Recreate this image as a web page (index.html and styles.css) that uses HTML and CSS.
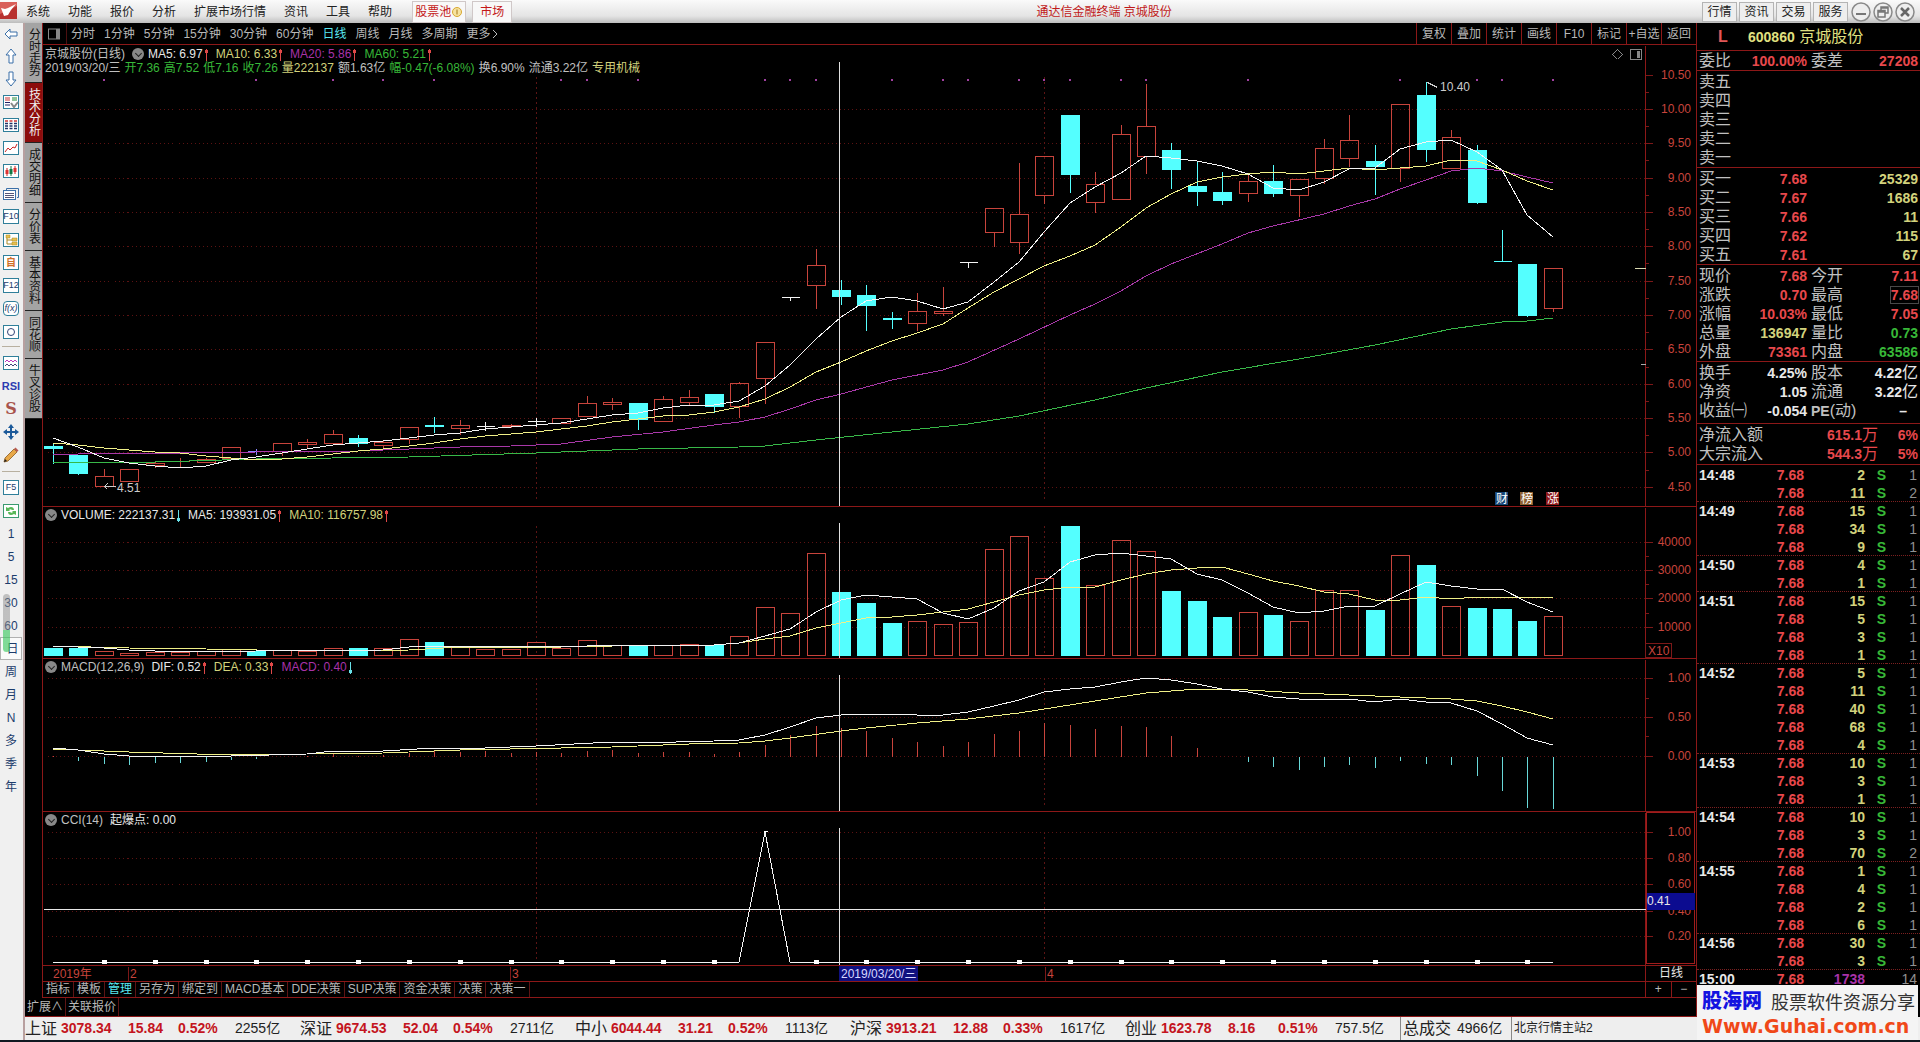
FILE: index.html
```html
<!DOCTYPE html>
<html lang="zh-CN">
<head>
<meta charset="utf-8">
<title>通达信金融终端 京城股份</title>
<link rel="stylesheet" href="styles.css">
</head>
<body>
<header class="menubar">
  <svg class="logo" viewBox="0 0 17 17" width="17" height="17"><rect width="17" height="17" fill="#b8322f"/><path d="M0 0h17v4L0 12z" fill="#d9605a"/><path d="M1 6l4 1 3-1 8-4-5 6-3 5-4 1z" fill="#fff"/></svg>
  <nav class="menus">
    <button>系统</button><button>功能</button><button>报价</button><button>分析</button><button>扩展市场行情</button><button>资讯</button><button>工具</button><button>帮助</button>
  </nav>
  <button class="hot">股票池<svg viewBox="0 0 12 12" width="12" height="12"><circle cx="6" cy="6" r="4.500" fill="#f6e3a0" stroke="#d9a830"/><path d="M6 3.500v5" stroke="#a87818"/></svg></button>
  <button class="hot market">市场</button>
  <h1 class="title">通达信金融终端 京城股份</h1>
  <div class="actions"><button>行情</button><button>资讯</button><button>交易</button><button>服务</button></div>
  <div class="winctl">
    <button aria-label="最小化"><svg viewBox="0 0 20 20" width="20" height="20"><circle cx="10" cy="10" r="9" fill="#eee" stroke="#8a8a8a" stroke-width="1.500"/><path d="M5 12h10" stroke="#777" stroke-width="2"/></svg></button>
    <button aria-label="还原"><svg viewBox="0 0 20 20" width="20" height="20"><circle cx="10" cy="10" r="9" fill="#eee" stroke="#8a8a8a" stroke-width="1.500"/><path d="M8 8V5h7v6h-3M5 8.500h7V15H5zM8 6h7M5 10h7" fill="none" stroke="#777" stroke-width="1.500"/></svg></button>
    <button aria-label="关闭"><svg viewBox="0 0 20 20" width="20" height="20"><circle cx="10" cy="10" r="9" fill="#eee" stroke="#8a8a8a" stroke-width="1.500"/><path d="M6 6l8 8M14 6l-8 8" stroke="#666" stroke-width="2.500"/></svg></button>
  </div>
</header>

<div class="workspace">
  <aside class="tools">
    <button aria-label="后退"><svg viewBox="0 0 16 16"><path d="M2 8l5-5v3h7v4H7v3z" fill="#fff" stroke="#3b6fa8"/></svg></button>
    <button aria-label="上翻"><svg viewBox="0 0 16 16"><path d="M8 1l5 6h-3v8H6V7H3z" fill="#fff" stroke="#3b6fa8"/></svg></button>
    <button aria-label="下翻"><svg viewBox="0 0 16 16"><path d="M8 15l5-6h-3V1H6v8H3z" fill="#fff" stroke="#3b6fa8"/></svg></button>
    <button aria-label="自选"><svg viewBox="0 0 16 16"><rect x=".5" y="1.500" width="15" height="13" fill="#fff" stroke="#2f7f9a"/><path d="M2 4h5M2 6h5" stroke="#c33"/><path d="M9 4h5M9 6h5" stroke="#283"/><path d="M2 8.500h5M2 11h5" stroke="#226"/><path d="M8 9l3 4 4-5" fill="none" stroke="#888" stroke-width="2"/></svg></button>
    <button aria-label="列表"><svg viewBox="0 0 16 16"><rect x=".5" y="1.500" width="15" height="13" fill="#fff" stroke="#2f7f9a"/><path d="M2 4h12" stroke="#c33" stroke-width="1.500" stroke-dasharray="3 1.500"/><path d="M2 6.500h12M2 9h12M2 11.500h12" stroke="#236" stroke-width="1.500" stroke-dasharray="3 1.500"/></svg></button>
    <button aria-label="走势"><svg viewBox="0 0 16 16"><rect x=".5" y="1.500" width="15" height="13" fill="#fff" stroke="#2f7f9a"/><path d="M2 12l3-4 2 2 3-3 2 1 2-4" fill="none" stroke="#c22"/></svg></button>
    <button aria-label="K线"><svg viewBox="0 0 16 16"><rect x=".5" y="1.500" width="15" height="13" fill="#fff" stroke="#2f7f9a"/><path d="M4 5v8M12 3v8" stroke="#c22"/><path d="M8 3v10" stroke="#174"/><path d="M2.500 7h3v4h-3zM10.500 5h3v4h-3z" fill="#d33"/><path d="M6.500 6h3v5h-3z" fill="#174"/></svg></button>
    <button aria-label="多窗口"><svg viewBox="0 0 16 16"><path d="M3.500 4V2.500h12v9H14" fill="none" stroke="#3b6fa8"/><rect x=".5" y="4.500" width="12" height="9" fill="#fff" stroke="#3b6fa8"/><path d="M2 7.500h9M2 9.500h9M2 11.500h9" stroke="#557"/></svg></button>
    <button class="boxed">F10</button>
    <button aria-label="分类"><svg viewBox="0 0 16 16"><rect x=".5" y="1.500" width="15" height="13" fill="#fff" stroke="#2f7f9a"/><path d="M4 5v7h5M4 8h5" fill="none" stroke="#a82"/><path d="M3 3h4v3H3zM9 6h5v3H9zM9 10h5v3H9z" fill="#e8c050" stroke="#a82" stroke-width=".5"/></svg></button>
    <button class="boxed orange">自</button>
    <button class="boxed">F12</button>
    <button class="boxed round"><i>f(x)</i></button>
    <button aria-label="圆"><svg viewBox="0 0 16 16"><rect x=".5" y="1.500" width="15" height="13" fill="#fff" stroke="#2f7f9a"/><circle cx="8" cy="8" r="3.500" fill="none" stroke="#347"/></svg></button>
    <hr>
    <button aria-label="波动"><svg viewBox="0 0 16 16"><rect x=".5" y="1.500" width="15" height="13" fill="#fff" stroke="#2f7f9a"/><path d="M2 7l2-2 2 2 2-2 2 2 2-2 2 2" fill="none" stroke="#b3b"/><path d="M2 11l2-2 2 2 2-2 2 2 2-2 2 2" fill="none" stroke="#447"/></svg></button>
    <button class="rsi">RSI</button>
    <button class="money">S</button>
    <button aria-label="移动"><svg viewBox="0 0 16 16"><path d="M8 0l3 4H9v3h3V5l4 3-4 3V9H9v3h2l-3 4-3-4h2V9H4v2L0 8l4-3v2h3V4H5z" fill="#1c5a9a"/></svg></button>
    <button aria-label="画笔"><svg viewBox="0 0 16 16"><path d="M1 15l1-4 9-9 3 3-9 9z" fill="#e8a848" stroke="#8a5a20" stroke-width=".8"/><path d="M11 2l1.500-1.500 3 3L14 5z" fill="#b85a50"/><path d="M1 15l1-3 2 2z" fill="#222"/></svg></button>
    <hr class="second">
    <button class="boxed">F5</button>
    <button aria-label="刷新"><svg viewBox="0 0 16 16"><rect x=".5" y="1.500" width="15" height="13" fill="#fff" stroke="#3a9a70"/><path d="M3 8V4l2 1c3-2 6-1 6 2H9C8 6 7 6 6 7l1 1zM13 8v4l-2-1c-3 2-6 1-6-2h2c1 1 2 1 3 0L9 8z" fill="#58b858"/></svg></button>
    <button>1</button><button>5</button><button>15</button><button>30</button><button>60</button>
    <button class="current">日<span class="meter"></span></button>
    <button>周</button><button>月</button><button>N</button><button>多</button><button>季</button><button>年</button>
  </aside>

  <div class="content">
    <div class="upper">
      <div class="left">
        <div class="charts">
          <nav class="vtabs">
            <button>分时走势</button><button class="on">技术分析</button><button>成交明细</button><button>分价表</button><button>基本资料</button><button>同花顺</button><button>牛叉诊股</button>
          </nav>
          <main class="stage">
            <div class="periods">
              <button class="split" aria-label="布局"><svg viewBox="0 0 12 12" width="12" height="12"><rect x=".5" y="1" width="11" height="10" fill="none" stroke="#888"/><path d="M8 1h3v10H8z" fill="#888"/></svg></button>
              <div class="plist"><button>分时</button><button>1分钟</button><button>5分钟</button><button>15分钟</button><button>30分钟</button><button>60分钟</button><button class="on">日线</button><button>周线</button><button>月线</button><button>多周期</button><button>更多<svg viewBox="0 0 8 10" width="8" height="10"><path d="M2 1l4 4-4 4" fill="none" stroke="#bbb"/></svg></button></div>
              <div class="ops"><button>复权</button><button>叠加</button><button>统计</button><button>画线</button><button>F10</button><button>标记</button><button>+自选</button><button>返回</button></div>
            </div>
            <section class="panel">
              <svg class="plot" id="price"></svg>
              <div class="legend">
                <div class="line"><span class="g">京城股份(日线)</span><b class="drop"></b><span>MA5: 6.97<i class="up"></i></span><span class="y">MA10: 6.33<i class="up"></i></span><span class="p">MA20: 5.86<i class="up"></i></span><span class="gr">MA60: 5.21<i class="up"></i></span></div>
                <div class="line info"><span class="g">2019/03/20/三</span><span class="gr">开7.36</span><span class="gr">高7.52</span><span class="gr">低7.16</span><span class="gr">收7.26</span><span class="y">量222137</span><span class="g">额1.63亿</span><span class="gr">幅-0.47(-6.08%)</span><span class="g">换6.90%</span><span class="g">流通3.22亿</span><span class="y">专用机械</span></div>
              </div>
            </section>
            <section class="panel">
              <svg class="plot" id="volume"></svg>
              <div class="legend"><div class="line"><b class="drop"></b><span>VOLUME: 222137.31<i class="down"></i></span><span>MA5: 193931.05<i class="up"></i></span><span class="y">MA10: 116757.98<i class="up"></i></span></div></div>
            </section>
            <section class="panel">
              <svg class="plot" id="macd"></svg>
              <div class="legend"><div class="line"><b class="drop"></b><span class="g">MACD(12,26,9)</span><span>DIF: 0.52<i class="up"></i></span><span class="y">DEA: 0.33<i class="up"></i></span><span class="p">MACD: 0.40<i class="down"></i></span></div></div>
            </section>
            <section class="panel">
              <svg class="plot" id="cci"></svg>
              <div class="legend"><div class="line"><b class="drop"></b><span class="g">CCI(14)</span><span>起爆点: 0.00</span></div></div>
            </section>
            <div class="dates"><svg class="plot" id="dates"></svg><span class="unit">日线</span></div>
            <div class="itabs"><button>指标</button><button>模板</button><button class="on">管理</button><button>另存为</button><button>绑定到</button><button>MACD基本</button><button>DDE决策</button><button>SUP决策</button><button>资金决策</button><button>决策</button><button>决策一</button><div class="zoom"><button>+</button><button>−</button></div></div>
          </main>
        </div>
        <div class="ext"><button>扩展∧</button><button>关联报价</button></div>
      </div>

      <aside class="side">
        <h2 class="stock"><span class="flag">L</span><span><b>600860</b> 京城股份</span></h2>
        <table class="quote ratio"><tbody><tr><th>委比</th><td class="r">100.00%</td><th>委差</th><td class="r">27208</td></tr></tbody></table>
        <table class="quote"><tbody><tr><th>卖五</th><td></td><th></th><td></td></tr><tr><th>卖四</th><td></td><th></th><td></td></tr><tr><th>卖三</th><td></td><th></th><td></td></tr><tr><th>卖二</th><td></td><th></th><td></td></tr><tr><th>卖一</th><td></td><th></th><td></td></tr></tbody></table>
        <table class="quote"><tbody><tr><th>买一</th><td class="r">7.68</td><th></th><td class="y">25329</td></tr><tr><th>买二</th><td class="r">7.67</td><th></th><td class="y">1686</td></tr><tr><th>买三</th><td class="r">7.66</td><th></th><td class="y">11</td></tr><tr><th>买四</th><td class="r">7.62</td><th></th><td class="y">115</td></tr><tr><th>买五</th><td class="r">7.61</td><th></th><td class="y">67</td></tr></tbody></table>
        <table class="quote"><tbody><tr><th>现价</th><td class="r">7.68</td><th>今开</th><td class="r">7.11</td></tr><tr><th>涨跌</th><td class="r">0.70</td><th>最高</th><td class="r"><span class="mark">7.68</span></td></tr><tr><th>涨幅</th><td class="r">10.03%</td><th>最低</th><td class="r">7.05</td></tr><tr><th>总量</th><td class="y">136947</td><th>量比</th><td class="gr">0.73</td></tr><tr><th>外盘</th><td class="r">73361</td><th>内盘</th><td class="gr">63586</td></tr></tbody></table>
        <table class="quote base"><tbody><tr><th>换手</th><td>4.25%</td><th>股本</th><td>4.22<em>亿</em></td></tr><tr><th>净资</th><td>1.05</td><th>流通</th><td>3.22<em>亿</em></td></tr><tr><th>收益㈠</th><td>-0.054</td><th><b>PE</b>(动)</th><td class="dash">–</td></tr></tbody></table>
        <table class="quote flow"><tbody><tr><th>净流入额</th><td class="r">615.1<em>万</em></td><td class="r">6%</td></tr><tr><th>大宗流入</th><td class="r">544.3<em>万</em></td><td class="r">5%</td></tr></tbody></table>
        <table class="ticks"><tbody id="ticks"></tbody></table>
      </aside>
    </div>

    <footer class="status">
      <div class="idx"><span>上证</span><b>3078.34</b><b>15.84</b><b>0.52%</b><span>2255亿</span></div>
      <div class="idx"><span>深证</span><b>9674.53</b><b>52.04</b><b>0.54%</b><span>2711亿</span></div>
      <div class="idx"><span>中小</span><b>6044.44</b><b>31.21</b><b>0.52%</b><span>1113亿</span></div>
      <div class="idx"><span>沪深</span><b>3913.21</b><b>12.88</b><b>0.33%</b><span>1617亿</span></div>
      <div class="idx"><span>创业</span><b>1623.78</b><b>8.16</b><b>0.51%</b><span>757.5亿</span></div>
      <div class="total"><span>总成交</span><span>4966亿</span></div>
      <div class="host">北京行情主站2</div>
    </footer>
  </div>
</div>
<div class="brand"><div class="row"><strong>股海网</strong><span>股票软件资源分享</span></div><a href="#">Www.Guhai.com.cn</a></div>
<script src="chart.js"></script>
</body>
</html>
```
FILE: styles.css
```css
* { box-sizing: border-box; }
body {
  margin: 0;
  min-height: 100vh;
  display: flex;
  flex-direction: column;
  background: #101820;
  color: #e8e8e8;
  font: 12px/16px "Liberation Sans", "Noto Sans CJK SC", sans-serif;
  padding-bottom: 2px;
}
button {
  font: inherit;
  color: inherit;
  background: none;
  border: 0;
  padding: 0;
  margin: 0;
  white-space: nowrap;
}
svg { display: block; }
.r { color: #e8484c; }
.y { color: #d2d27c; }
.p { color: #a832a8; }
.g { color: #c0c0c0; }
.gr { color: #38b838; }

/* menu bar */
.menubar {
  display: flex;
  align-items: center;
  height: 23px;
  background: linear-gradient(#fafafa, #e4e4e4 70%, #bdbdbd);
  color: #222;
}
.logo { margin-bottom: 2px; }
.menus { display: flex; gap: 18px; padding-left: 9px; }
.hot {
  display: flex;
  align-items: center;
  height: 22px;
  margin-left: 20px;
  padding: 0 2px;
  color: #c41818;
  background: #f8f8f8;
  border: 1px solid #d0c8c8;
}
.hot.market { margin-left: 6px; padding: 0 7px; }
.title { flex: 1; margin: 0; padding-right: 6px; text-align: center; font-size: 12px; font-weight: normal; color: #c01818; }
.actions { display: flex; gap: 2px; }
.actions button { width: 35px; height: 20px; border: 1px solid #b4b4b4; background: #eee; }
.winctl { display: flex; gap: 2px; padding: 0 5px 0 3px; }

/* frame */
.workspace { flex: 1; display: flex; }
.tools {
  width: 25px;
  flex: none;
  display: flex;
  flex-direction: column;
  background: #f0f0f0;
  border-right: 2px solid #b8a0a0;
  color: #1c3c6c;
}
.tools button { height: 23px; display: flex; align-items: center; justify-content: center; position: relative; width: 22px; }
.tools button:first-child { height: 21px; }
.tools svg { width: 16px; height: 16px; }
.tools hr { width: 18px; margin: 3px 2px 0; border: 0; border-top: 1px solid #b8b0a0; height: 5px; }
.tools .second { margin-top: 5px; }
.tools .boxed { width: 16px; height: 15px; margin: 4px 3px; border: 1px solid #2f7f9a; background: #fff; font-size: 9px; line-height: 13px; }
.tools .round { border-radius: 4px; }
.tools .orange { color: #d07028; font-weight: bold; font-size: 10px; }
.tools .rsi { font-weight: bold; font-size: 11px; color: #2c3cb0; }
.tools .money { font: bold 16px/20px "DejaVu Serif", serif; color: #a8544c; }
.tools .current { border: 1px solid #b0b0b0; background: #fafafa; padding-left: 3px; }
.meter { position: absolute; left: 2px; bottom: 7px; width: 7px; height: 58px; border-radius: 4px; background: linear-gradient(#90909080 0 36px, #38c85ca0 36px); }
.content { flex: 1; min-width: 0; display: flex; flex-direction: column; background: #000; }
.upper { flex: 1; display: flex; }
.left { flex: 1; min-width: 0; display: flex; flex-direction: column; }
.charts { flex: 1; display: flex; }
.vtabs { width: 17px; flex: none; }
.vtabs button {
  display: block;
  width: 17px;
  padding: 5px 1px 6px 1px;
  writing-mode: vertical-rl;
  font-size: 12px;
  line-height: 14px;
  color: #111;
  background: #a4a4a4;
  border-bottom: 1px solid #222;
}
.vtabs .on { background: #8c0c0c; color: #f0f0f0; }
.stage {
  flex: 1;
  min-width: 0;
  display: grid;
  grid-template-columns: minmax(0, 1fr);
  grid-template-rows: 22px minmax(200px, 461fr) minmax(90px, 152fr) minmax(90px, 153fr) minmax(90px, 154fr) 16px 17px;
  border-left: 1px solid #8c1818;
}
.periods { display: flex; border-bottom: 1px solid #8c1818; color: #b8b8b8; }
.periods .split { width: 24px; padding-left: 5px; border-right: 1px solid #4c1010; }
.plist { flex: 1; display: flex; gap: 9px; padding-left: 4px; }
.plist button { display: flex; align-items: center; }
.ops { display: flex; }
.ops button { width: 35px; border-left: 1px solid #8c1818; }
.periods .on, .itabs .on { color: #58e8f0; }

/* chart panels */
.panel { display: grid; grid-template: minmax(0, 1fr) / minmax(0, 1fr); }
.panel + .panel { border-top: 1px solid #8c1818; }
.panel > * { grid-area: 1 / 1; }
.plot { width: 100%; height: 0; min-height: 100%; font-size: 12px; }
.legend { z-index: 1; align-self: start; padding-left: 2px; padding-top: 1px; }
.line { display: flex; gap: 7px; line-height: 14px; align-items: center; white-space: nowrap; }
.panel:nth-child(2) .legend { padding-top: 2px; }
.line.info { gap: 4px; }
.drop { width: 12px; height: 12px; border-radius: 50%; background: #888; margin-right: -3px; display: grid; place-items: center; }
.drop::after { content: ""; width: 4px; height: 4px; border: solid #222; border-width: 0 1px 1px 0; rotate: 45deg; margin-top: -2px; }
.line i { display: inline-block; width: 1px; height: 12px; margin: 0 2px 0 3px; vertical-align: middle; position: relative; background: #e04848; }
.line i::after { content: ""; position: absolute; left: -1px; top: 1px; width: 3px; height: 3px; background: #e04848; }
.line i.down, .line i.down::after { background: #68e0e8; }
.line i.down::after { top: auto; bottom: 1px; }
.dates { display: flex; border-top: 1px solid #8c1818; }
.dates .plot { flex: 1; width: auto; }
.unit { width: 51px; text-align: center; line-height: 15px; border-left: 1px solid #8c1818; }
.itabs { display: flex; border-top: 1px solid #8c1818; border-bottom: 1px solid #8c1818; color: #b8b8b8; }
.itabs > button { padding: 0 3px; border-right: 1px solid #5c1414; line-height: 15px; }
.zoom { margin-left: auto; display: flex; width: 51px; border-left: 1px solid #8c1818; }
.zoom button { flex: 1; line-height: 15px; }
.zoom button + button { border-left: 1px solid #8c1818; }
.ext { display: flex; height: 19px; color: #b8b8b8; border-bottom: 1px solid #8c1818; }
.ext button { padding: 0 2px; border-right: 1px solid #5c1414; }

/* quote panel */
.side { width: 224px; flex: none; border-left: 1px solid #8c1818; }
.stock { display: flex; margin: 0; height: 28px; padding-left: 21px; gap: 20px; font-size: 16px; line-height: 27px; font-weight: normal; color: #e0e080; border-bottom: 1px solid #8c1818; }
.stock b { font-size: 14px; }
.flag { color: #e05858; font-weight: bold; width: 10px; }
table { border-collapse: separate; border-spacing: 0; table-layout: fixed; width: 100%; }
.quote { border-bottom: 1px solid #8c1818; padding-top: 1px; }
.quote.ratio { padding-top: 0; }
.quote.base { padding-bottom: 3px; }
.quote.flow { padding-bottom: 1px; }
.quote tr { height: 19px; }
.quote th, .quote td { padding: 0; height: 19px; line-height: 18px; white-space: nowrap; }
.quote th { font-size: 16px; font-weight: normal; text-align: left; color: #c0c0c0; padding-left: 2px; }
.quote th b { font-size: 14px; }
.quote td { font-size: 14px; font-weight: bold; text-align: right; }
.quote th:first-child { width: 50px; }
.quote td:nth-child(2) { width: 60px; }
.quote th:nth-child(3) { width: 50px; padding-left: 4px; }
.quote td:last-child { padding-right: 2px; }
.quote.flow th:first-child { width: 70px; }
.quote.flow td:nth-child(2) { width: 111px; }
.quote em { font-style: normal; font-weight: normal; font-size: 16px; line-height: 16px; }
.quote td.dash { padding-right: 13px; }
.mark { display: inline-block; line-height: 16px; outline: 1px solid #484848; }
.ticks td { padding: 0; height: 18px; line-height: 16px; font-size: 14px; font-weight: bold; text-align: right; border-top: 1px solid transparent; }
.ticks tr:not(:first-child).minute td { border-top: 1px dotted #7c2020; }
.ticks td:nth-child(1) { width: 50px; text-align: left; padding-left: 2px; }
.ticks td:nth-child(2) { width: 57px; }
.ticks td:nth-child(3) { width: 61px; }
.ticks td:nth-child(4) { width: 21px; }
.ticks td:nth-child(5) { font-weight: normal; color: #909090; padding-right: 3px; }

/* index strip */
.status { display: flex; height: 23px; background: #eee; color: #222; font-size: 14px; line-height: 23px; white-space: nowrap; }
.idx { width: 275px; display: grid; grid-template-columns: 36px 67px 50px 57px 1fr; }
.status span { font-size: 16px; }
.idx span:last-child, .total span:last-child { font-size: 14px; }
.idx b { color: #c41420; }
.total { display: flex; gap: 6px; width: 111px; border-left: 1px solid #888; padding-left: 2px; }
.host { border-left: 1px solid #888; padding-left: 2px; font-size: 12px; }
.brand { position: absolute; right: 2px; bottom: 2px; width: 221px; background: #f4f4f4; padding: 4px 3px 0 5px; height: 55px; }
.brand .row { display: flex; justify-content: space-between; line-height: 24px; }
.brand strong { font-size: 20px; color: #1414e0; font-weight: 900; }
.brand .row span { font: 18px/24px "Noto Sans CJK SC", sans-serif; color: #333; }
.brand a { display: block; font: bold 19px/26px "DejaVu Sans", sans-serif; color: #f04818; text-decoration: none; }
```
FILE: chart.js
```js
const RED = '#c8443c', DIM = '#7c1818', CYAN = '#54ffff', WHITE = '#f4f4f4', YELLOW = '#f0f088';
const PLOT = 1602, AXIS = 51, FIRST = 10, STEP = 25.42;

// kind, high, body top, body bottom, low
const candles = `c442,446,449,463 c455,455,474,474 r468,476,486,486 r468,469,481,481 r460,463,465,467 r457,461,461,466
r457,459,462,462 r446,447,458,458 b448,451,451,454 r443,443,451,455 r438,442,444,448 r429,434,443,443 c434,438,444,446
r440,442,445,447 r427,427,439,443 c416,425,427,432 r419,425,428,434 w421,426,426,430 r423,425,426,427 w417,421,421,426
r417,418,423,423 r395,403,416,416 r397,402,404,409 c403,403,420,429 r395,399,421,421 r389,397,402,404 c393,394,407,412
r381,383,406,417 r342,342,378,403 w297,297,297,300 r248,265,285,308 c279,290,297,304 c284,295,306,330 c311,318,320,328
r292,311,323,330 r286,311,313,315 w262,262,262,267 r208,208,232,246 r162,214,242,253 r156,156,195,203 c115,115,175,192
r171,184,202,212 r124,134,199,199 r83,126,156,173 c142,150,170,188 c160,186,192,205 c171,192,201,204 r172,181,193,201
c164,181,194,196 r179,179,195,216 r138,148,178,183 r114,140,158,166 c144,161,167,194 r104,104,168,181 c81,95,150,161
r129,137,168,168 c144,150,203,203 c229,261,261,261 c263,264,316,316 r268,268,308,311`.split(/\s+/)
  .map(s => [s[0], ...s.slice(1).split(',').map(Number)]);

const volumes = [648,648,651,653,652,652,651,649,651,650,651,648,648,648,639,642,647,649,649,642,648,640,645,645,645,644,645,636,607,613,553,592,603,623,621,624,622,549,536,578,526,585,540,551,591,601,617,612,615,621,590,590,610,555,565,606,608,609,621,616];
const hist = [755,760,763,764,762,762,761,759,758,756,755,753,755,754,752,750,751,750,752,751,752,750,749,752,751,751,753,751,744,734,725,727,730,737,741,745,741,733,730,722,724,728,725,726,735,747,756,761,766,769,766,764,767,760,763,764,775,790,807,808];
const seq = a => a.map((y, i) => [i, y]);
const ma5 = seq([438,447,458,463,466,468,466,460,457,453,449,445,443,441,438,435,433,429,427,425,423,419,415,413,408,405,405,401,386,365,339,317,301,297,301,309,302,282,262,232,203,187,173,156,158,161,166,174,188,190,182,169,168,149,142,140,152,170,215,237]);
const ma10 = seq([443,445,448,450,452,453,456,458,460,459,457,454,451,449,446,443,439,436,434,432,429,426,422,419,416,415,412,407,399,387,372,362,351,341,333,324,308,292,279,266,256,245,227,208,194,182,177,174,172,174,171,168,170,168,166,160,161,170,181,190]);
const ma20 = [[0,455],[2,453],[5,453],[8,452],[12,451],[16,447],[18,446],[20,444],[22,437],[24,432],[26,425],[27,422],[28,417],[29,409],[30,400],[31,394],[33,380],[35,370],[36,362],[38,339],[40,315],[41,304],[42,291],[43,276],[44,264],[46,244],[47,233],[48,226],[50,214],[51,206],[52,199],[53,189],[54,180],[55,171],[56,168],[57,171],[58,177],[59,183]];
const ma60 = [[0,462],[4,462],[8,459],[14,457],[19,453],[23,449],[27,447],[28,446],[30,440],[33,432],[36,424],[38,416],[41,400],[43,388],[46,372],[49,359],[52,345],[55,329],[57,322],[58,321],[59,318]];
const vma5 = [[0,646],[1,647],[2,648],[3,650],[5,652],[8,651],[13,650],[14,647],[15,646],[19,646],[20,647],[21,646],[22,645],[26,645],[27,643],[28,636],[29,629],[30,612],[31,600],[32,595],[33,597],[34,599],[35,613],[36,619],[37,608],[38,591],[39,582],[40,562],[41,555],[42,553],[43,556],[44,559],[45,574],[46,580],[47,593],[48,607],[49,613],[50,611],[51,606],[52,606],[53,594],[54,582],[55,586],[56,589],[57,589],[58,602],[59,612]];
const vma10 = [[0,646],[3,648],[6,649],[10,651],[12,651],[14,650],[16,647],[20,647],[24,645],[26,645],[27,643],[28,639],[29,636],[30,628],[31,623],[32,618],[33,617],[34,615],[35,612],[36,609],[37,602],[38,595],[39,590],[40,587],[41,587],[42,580],[43,574],[44,570],[45,568],[46,567],[47,574],[48,581],[49,586],[50,592],[51,594],[52,600],[53,600],[54,597],[55,599],[56,597],[59,597]];
const dif = [[0,748],[1,750],[2,754],[3,756],[7,756],[10,754],[11,751],[13,751],[15,748],[17,748],[19,746],[22,742],[23,743],[26,741],[27,740],[28,735],[29,727],[30,718],[31,715],[32,714],[33,714],[34,715],[35,715],[36,712],[37,706],[38,700],[39,692],[40,689],[41,687],[42,682],[43,678],[44,680],[45,684],[46,689],[47,692],[48,697],[49,699],[51,699],[52,702],[53,699],[54,702],[55,703],[56,711],[57,724],[58,738],[59,745]];
const dea = [[0,749],[3,752],[7,755],[10,754],[13,753],[16,750],[22,747],[25,744],[27,743],[28,741],[29,738],[31,731],[32,728],[34,723],[36,719],[38,713],[41,701],[43,693],[45,689],[46,689],[47,690],[49,693],[51,695],[53,697],[55,699],[56,701],[57,706],[58,712],[59,719]];
const signals = [2,8,11,13,15,20,21,23,28,29,30,33,35,36,38,39,40,42,43,47,53,56,57,59];

function canvas(id, top, bottom, plotWidth) {
  const el = document.getElementById(id);
  const W = el.clientWidth, H = el.clientHeight;
  const pw = plotWidth ? W : W - AXIS;
  let out = '';
  const k = pw / PLOT;
  const px = v => Math.round(v * k);
  const X = i => px(FIRST + i * STEP);
  const Y = v => Math.round((v - top) / (bottom - top) * H);
  const c = {
    W, H, pw, px, X, Y,
    line(x1, y1, x2, y2, color, extra = '') {
      out += `<path d="M${x1 + .5} ${y1 + .5}L${x2 + .5} ${y2 + .5}" stroke="${color}" ${extra}/>`;
    },
    rect(x, y, w, h, fill, stroke = 'none') {
      const o = stroke === 'none' ? 0 : .5;
      out += `<rect x="${x + o}" y="${y + o}" width="${w}" height="${h}" fill="${fill}" stroke="${stroke}"/>`;
    },
    curve(points, color) {
      out += `<polyline points="${points.map(p => X(p[0]) + ',' + Y(p[1])).join(' ')}" fill="none" stroke="${color}"/>`;
    },
    text(x, y, s, color, anchor = 'start') {
      out += `<text x="${x}" y="${y}" fill="${color}" text-anchor="${anchor}">${s}</text>`;
    },
    frame(labels, from, minor) {
      labels.forEach(([v, s], n) => {
        if (n || id !== 'price') c.line(4, Y(v), pw, Y(v), '#5c1212', 'stroke-dasharray="1 3"');
        c.line(pw, Y(v), pw + 7, Y(v), DIM);
        c.text(W - 5, Y(v) + 4, s, RED, 'end');
        if (n) for (let j = 1; j < minor; j++) {
          const y = Y(labels[n - 1][0] + (v - labels[n - 1][0]) * j / minor);
          c.line(pw, y, pw + 3, y, DIM);
        }
      });
      [19, 39].forEach(i => c.line(X(i), Y(from), X(i), H - 6, '#5c1414', 'stroke-dasharray="2 3"'));
      c.line(pw, 0, pw, H, '#8c1818');
    },
    cross(from) { c.line(px(796), Y(from), px(796), H, '#e0e0e0'); },
    done() { el.innerHTML = `<g shape-rendering="crispEdges">${out}</g>`; }
  };
  return c;
}

function drawPrice() {
  const c = canvas('price', 45, 506);
  c.frame(['10.50','10.00','9.50','9.00','8.50','8.00','7.50','7.00','6.50','6.00','5.50','5.00','4.50'].map((s, i) => [74.5 + i * 34.36, s]), 76, 2);
  signals.forEach(i => c.rect(c.X(i) - 1, c.Y(79), 2, 2, '#a040a0'));
  candles.forEach(([kind, hi, a, b, lo], i) => {
    const x = c.X(i), color = { r: RED, c: CYAN, w: WHITE, b: '#8888ff' }[kind];
    if (a === b) { c.line(x - 9, c.Y(a), x + 9, c.Y(a), color); c.line(x, c.Y(hi), x, c.Y(lo), color); return; }
    if (kind === 'c') { c.line(x, c.Y(hi), x, c.Y(lo), color); c.rect(x - 9, c.Y(a), 19, c.Y(b) - c.Y(a), CYAN); return; }
    if (hi < a) c.line(x, c.Y(hi), x, c.Y(a), RED);
    if (lo > b) c.line(x, c.Y(b), x, c.Y(lo), RED);
    c.rect(x - 9, c.Y(a), 18, c.Y(b) - c.Y(a), 'none', RED);
  });
  c.curve(ma60, '#38b848'); c.curve(ma20, '#a838a8'); c.curve(ma10, YELLOW); c.curve(ma5, WHITE);
  c.line(c.px(1384), c.Y(82), c.px(1394), c.Y(87), '#ccc');
  c.text(c.px(1397), c.Y(91), '10.40', '#ccc');
  c.line(c.px(61), c.Y(486), c.px(72), c.Y(486), '#ccc');
  c.line(c.px(61), c.Y(486), c.px(64), c.Y(483), '#ccc');
  c.line(c.px(61), c.Y(486), c.px(64), c.Y(489), '#ccc');
  c.text(c.px(74), c.Y(492), '4.51', '#ccc');
  [['财', '#184878', 57], ['榜', '#906030', 58], ['涨', '#901818', 59]].forEach(([s, bg, i]) => {
    c.rect(c.X(i) - 7, c.Y(492), 13, 13, bg);
    c.text(c.X(i) - 6, c.Y(503), s, '#fff');
  });
  c.line(c.pw - 11, c.Y(268), c.pw, c.Y(268), '#d8d8b0');
  c.line(c.pw - 5, c.Y(364), c.pw, c.Y(364), '#aaa');
  c.line(c.pw - 28, 4, c.pw - 23, 9, '#888'); c.line(c.pw - 23, 9, c.pw - 28, 14, '#888');
  c.line(c.pw - 28, 14, c.pw - 33, 9, '#888'); c.line(c.pw - 33, 9, c.pw - 28, 4, '#888');
  c.rect(c.pw - 15, 4, 11, 10, 'none', '#888'); c.rect(c.pw - 8, 6, 3, 7, '#888');
  c.cross(61);
  c.done();
}

function drawVolume() {
  const c = canvas('volume', 507, 658);
  c.frame([[542, '40000'], [570, '30000'], [598, '20000'], [627, '10000']], 525, 2);
  volumes.forEach((v, i) => {
    const x = c.X(i), y = c.Y(v), h = c.Y(655) - y;
    if (candles[i][0] === 'c' || i === 8) c.rect(x - 9, y, 19, h + 1, CYAN);
    else c.rect(x - 9, y, 18, h, 'none', RED);
  });
  c.curve(vma10, YELLOW); c.curve(vma5, WHITE);
  c.rect(c.pw, c.H - 15, 26, 14, '#000', DIM);
  c.text(c.pw + 3, c.H - 3, 'X10', RED);
  c.cross(522);
  c.done();
}

function drawMacd() {
  const c = canvas('macd', 659, 811);
  c.frame([[678, '1.00'], [717, '0.50'], [756, '0.00']], 677, 2);
  hist.forEach((v, i) => { if (v !== 756) c.line(c.X(i), c.Y(756), c.X(i), c.Y(v), v < 756 ? RED : '#68d8d8'); });
  c.curve(dea, YELLOW); c.curve(dif, WHITE);
  c.cross(674);
  c.done();
}

function drawCci() {
  const c = canvas('cci', 812, 965);
  c.frame([[832, '1.00'], [858, '0.80'], [884, '0.60'], [911, '0.40'], [936, '0.20']], 831, 1);
  c.curve([[0, 962], [27, 962], [28, 832], [29, 962], [59, 962]], WHITE);
  for (let i = 2; i < 60; i += 2) if (i !== 28) c.rect(c.X(i) - 2, c.Y(960), 5, 4, '#fff');
  c.line(c.X(28) - 2, c.Y(831), c.X(28) + 2, c.Y(831), '#fff');
  c.line(0, c.Y(909), c.pw, c.Y(909), '#e8e8e8');
  c.rect(c.pw + 1, 0, AXIS - 3, c.H - 2, 'none', '#a01c1c');
  c.rect(c.pw + 2, c.Y(893), AXIS - 3, 17, '#0c0c90');
  c.text(c.pw + 2, c.Y(905), '0.41', '#e8e8e8');
  c.cross(827);
  c.done();
}

function drawDates() {
  const c = canvas('dates', 966, 981, true);
  c.text(c.px(10), 12, '2019年', RED);
  [[85, '2'], [467, '3'], [1002, '4']].forEach(([x, s]) => {
    c.line(c.px(x), 0, c.px(x), c.H, DIM);
    c.text(c.px(x) + 2, 12, s, RED);
  });
  c.rect(c.px(796), 0, 79, c.H, '#101080');
  c.text(c.px(796) + 2, 12, '2019/03/20/三', '#d8d8ff');
  c.done();
}

const trades = {
  '14:48': [[2, 1], [11, 2]], '14:49': [[15, 1], [34, 1], [9, 1]], '14:50': [[4, 1], [1, 1]],
  '14:51': [[15, 1], [5, 1], [3, 1], [1, 1]], '14:52': [[5, 1], [11, 1], [40, 1], [68, 1], [4, 1]],
  '14:53': [[10, 1], [3, 1], [1, 1]], '14:54': [[10, 1], [3, 1], [70, 2]],
  '14:55': [[1, 1], [4, 1], [2, 1], [6, 1]], '14:56': [[30, 1], [3, 1]], '15:00': [[1738, 14]]
};
document.getElementById('ticks').innerHTML = Object.entries(trades).map(([time, rows]) =>
  rows.map(([lots, n], i) => `<tr class="${i ? '' : 'minute'}"><td>${i ? '' : time}</td><td class="r">7.68</td><td class="${lots > 999 ? 'p' : 'y'}">${lots}</td><td class="gr">${lots > 999 ? '' : 'S'}</td><td>${n}</td></tr>`).join('')).join('');

function drawAll() { drawPrice(); drawVolume(); drawMacd(); drawCci(); drawDates(); }
drawAll();
addEventListener('resize', drawAll);
```
